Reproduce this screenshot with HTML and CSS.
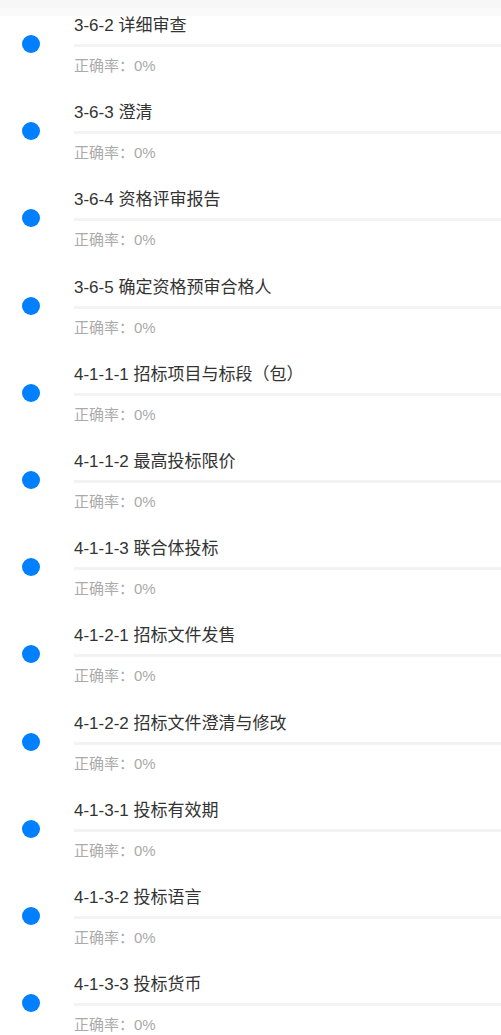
FILE: index.html
```html
<!DOCTYPE html>
<html lang="zh-CN">
<head>
<meta charset="utf-8">
<title>章节列表</title>
<link rel="stylesheet" href="styles.css">
</head>
<body>
<div class="topbar"></div>
<ul class="list">
  <li class="item"><span class="dot"></span><div class="body"><div class="title">3-6-2 详细审查</div><div class="bar"></div><div class="rate">正确率：0%</div></div></li>
  <li class="item"><span class="dot"></span><div class="body"><div class="title">3-6-3 澄清</div><div class="bar"></div><div class="rate">正确率：0%</div></div></li>
  <li class="item"><span class="dot"></span><div class="body"><div class="title">3-6-4 资格评审报告</div><div class="bar"></div><div class="rate">正确率：0%</div></div></li>
  <li class="item"><span class="dot"></span><div class="body"><div class="title">3-6-5 确定资格预审合格人</div><div class="bar"></div><div class="rate">正确率：0%</div></div></li>
  <li class="item"><span class="dot"></span><div class="body"><div class="title">4-1-1-1 招标项目与标段（包）</div><div class="bar"></div><div class="rate">正确率：0%</div></div></li>
  <li class="item"><span class="dot"></span><div class="body"><div class="title">4-1-1-2 最高投标限价</div><div class="bar"></div><div class="rate">正确率：0%</div></div></li>
  <li class="item"><span class="dot"></span><div class="body"><div class="title">4-1-1-3 联合体投标</div><div class="bar"></div><div class="rate">正确率：0%</div></div></li>
  <li class="item"><span class="dot"></span><div class="body"><div class="title">4-1-2-1 招标文件发售</div><div class="bar"></div><div class="rate">正确率：0%</div></div></li>
  <li class="item"><span class="dot"></span><div class="body"><div class="title">4-1-2-2 招标文件澄清与修改</div><div class="bar"></div><div class="rate">正确率：0%</div></div></li>
  <li class="item"><span class="dot"></span><div class="body"><div class="title">4-1-3-1 投标有效期</div><div class="bar"></div><div class="rate">正确率：0%</div></div></li>
  <li class="item"><span class="dot"></span><div class="body"><div class="title">4-1-3-2 投标语言</div><div class="bar"></div><div class="rate">正确率：0%</div></div></li>
  <li class="item"><span class="dot"></span><div class="body"><div class="title">4-1-3-3 投标货币</div><div class="bar"></div><div class="rate">正确率：0%</div></div></li>
</ul>
</body>
</html>
```
FILE: styles.css
```css
html, body {
  margin: 0;
  padding: 0;
  background: #ffffff;
}
body {
  font-family: "Liberation Sans", "Noto Sans CJK SC", sans-serif;
  overflow: hidden;
}
.topbar {
  position: fixed;
  top: 0;
  left: 0;
  right: 0;
  height: 16px;
  background: linear-gradient(#f7f7f7 0, #f7f7f7 8px, #fafafa 8px, #fafafa 16px);
  z-index: 2;
}
.list {
  list-style: none;
  margin: 0;
  padding: 14px 0 0 0;
}
.item {
  display: flex;
  align-items: flex-start;
  padding-bottom: 25.2px;
}
.dot {
  flex: none;
  width: 18px;
  height: 18px;
  border-radius: 50%;
  background: #007fff;
  margin: 21px 0 0 22px;
}
.body {
  flex: 1;
  margin-left: 34px;
}
.title {
  font-size: 17px;
  line-height: 24px;
  color: #333333;
}
.bar {
  height: 3px;
  margin-top: 6px;
  background: #f3f3f3;
}
.rate {
  margin-top: 9px;
  font-size: 15px;
  line-height: 20px;
  color: #aaaaaa;
}
```
